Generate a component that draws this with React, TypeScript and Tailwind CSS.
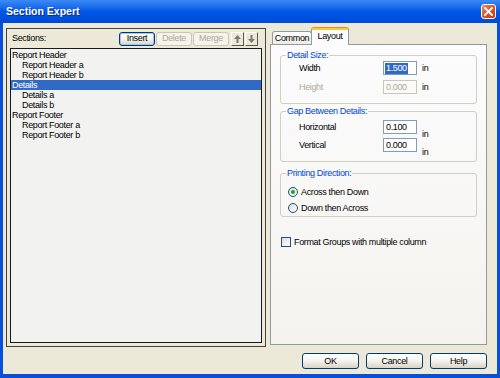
import React from "react";

const font = "font-['Liberation_Sans',Arial,sans-serif] tracking-[-0.35px]";

function Btn({
  label,
  className = "",
  disabled = false,
  focus = false,
}: {
  label: string;
  className?: string;
  disabled?: boolean;
  focus?: boolean;
}) {
  const look = disabled
    ? "border-[#C9C7BA] bg-[#F5F4EA] text-[#ACA899]"
    : "border-[#003C74] bg-linear-to-b from-[#FFFFFF] via-[#F4F3EE] to-[#D8D3C8] text-black";
  const ring = focus ? "shadow-[inset_0_0_0_1px_#A8C3EE]" : "";
  return (
    <div
      className={`flex items-center justify-center rounded-[3px] border text-[9px] leading-none ${look} ${ring} ${className}`}
    >
      {label}
    </div>
  );
}

function ArrowBtn({ down = false }: { down?: boolean }) {
  return (
    <div className="flex h-[14px] w-[13px] items-center justify-center border border-t-[#FFFFFF] border-l-[#FFFFFF] border-r-[#5A5A52] border-b-[#5A5A52] bg-[#ECE9D8]">
      <svg width="7" height="8" viewBox="0 0 7 8">
        {down ? (
          <path d="M2.5 0 H4.5 V4 H7 L3.5 8 L0 4 H2.5 Z" fill="#7A7A72" />
        ) : (
          <path d="M3.5 0 L7 4 H4.5 V8 H2.5 V4 H0 Z" fill="#7A7A72" />
        )}
      </svg>
    </div>
  );
}

const items: { text: string; level: number; selected?: boolean }[] = [
  { text: "Report Header", level: 0 },
  { text: "Report Header a", level: 1 },
  { text: "Report Header b", level: 1 },
  { text: "Details", level: 0, selected: true },
  { text: "Details a", level: 1 },
  { text: "Details b", level: 1 },
  { text: "Report Footer", level: 0 },
  { text: "Report Footer a", level: 1 },
  { text: "Report Footer b", level: 1 },
];

function Field({ value, disabled = false, selected = false }: { value: string; disabled?: boolean; selected?: boolean }) {
  return (
    <div
      className={`flex h-[14px] w-[34px] items-center border pl-[1px] text-[9px] leading-none ${
        disabled ? "border-[#C9C7BA] bg-[#FBFBF8] text-[#ACA899]" : "border-[#7F9DB9] bg-white text-black"
      }`}
    >
      {selected ? (
        <span className="bg-[#316AC5] px-[1px] py-[1px] text-white">{value}</span>
      ) : (
        <span className="px-[1px]">{value}</span>
      )}
    </div>
  );
}

function Radio({ checked = false, label }: { checked?: boolean; label: string }) {
  return (
    <div className="ml-[2px] flex h-[12px] items-center">
      <div className="flex h-[10px] w-[10px] items-center justify-center rounded-full border border-[#1C5180] bg-linear-to-br from-[#DCDCD6] to-[#FFFFFF]">
        {checked && <div className="h-[4px] w-[4px] rounded-full bg-[#21A121]" />}
      </div>
      <span className="ml-[3px] text-[9px] leading-none text-black">{label}</span>
    </div>
  );
}

export default function App() {
  return (
    <div className={`flex h-[378px] w-[500px] flex-col bg-[#0A4FDA] ${font}`}>
      {/* Title bar */}
      <div className="flex h-[23px] shrink-0 items-center justify-between bg-linear-to-b from-[#3B8AF5] via-[#0058E6] to-[#0049D6] pl-[6px] pr-[4px]">
        <span className="text-[10.5px] font-bold leading-none tracking-normal text-white [text-shadow:1px_1px_0_#0B2E8A]">
          Section Expert
        </span>
        <div className="flex h-[15px] w-[15px] items-center justify-center rounded-[3px] border border-white bg-linear-to-br from-[#F08A62] via-[#E0542A] to-[#C23A14]">
          <svg width="9" height="9" viewBox="0 0 9 9">
            <path d="M1 1 L8 8 M8 1 L1 8" stroke="white" strokeWidth="1.8" strokeLinecap="square" />
          </svg>
        </div>
      </div>

      {/* Body */}
      <div className="mx-[3px] mb-[4px] flex flex-1 flex-col bg-[#ECE9D8] pl-[3px] pr-[10px] pt-[4px]">
        <div className="flex gap-[4px]">
          {/* Left panel */}
          <div className="mt-[1px] flex h-[319px] w-[260px] flex-col border border-[#45453F] px-[3px] pb-[3px]">
            <div className="flex h-[19px] items-center">
              <span className="ml-[2px] text-[9px] leading-none text-black">Sections:</span>
              <div className="ml-auto mr-[4px] flex items-center">
                <Btn label="Insert" className="h-[14px] w-[36px]" focus />
                <Btn label="Delete" className="ml-[1px] h-[14px] w-[36px]" disabled />
                <Btn label="Merge" className="ml-[1px] h-[14px] w-[36px]" disabled />
                <div className="ml-[2px]">
                  <ArrowBtn />
                </div>
                <div className="ml-[1px]">
                  <ArrowBtn down />
                </div>
              </div>
            </div>
            <div className="flex-1 border border-[#1A1A1A] bg-[#F2F2F0] pt-[1px]">
              {items.map((it) => (
                <div
                  key={it.text}
                  className={`h-[10px] text-[9px] leading-[10px] ${it.level ? "pl-[11px]" : "pl-[1px]"} ${
                    it.selected ? "bg-[#316AC5] text-white" : "text-black"
                  }`}
                >
                  {it.text}
                </div>
              ))}
            </div>
          </div>

          {/* Right panel */}
          <div className="flex w-[217px] flex-col">
            <div className="flex h-[17px] items-end">
              <div className="ml-[2px] flex h-[13px] w-[40px] items-center justify-center rounded-t-[3px] border border-b-0 border-[#919B9C] bg-linear-to-b from-[#FFFFFF] to-[#ECEBE5] text-[9px] leading-none text-black">
                Common
              </div>
              <div className="relative z-10 -mb-px -ml-px flex h-[18px] w-[38px] flex-col rounded-t-[3px] border border-b-0 border-[#919B9C] border-t-[#E68B2C] bg-[#FCFCFE]">
                <div className="h-[2px] bg-[#FFC83C]" />
                <div className="flex flex-1 items-center justify-center pb-[2px] text-[9px] leading-none text-black">Layout</div>
              </div>
            </div>
            <div className="flex h-[301px] flex-col border border-[#919B9C] bg-linear-to-b from-[#FCFCFE] to-[#F4F3EE] px-[9px] pt-[5px]">
              {/* Detail Size */}
              <fieldset className="rounded-[3px] border border-[#D0D0BF] pb-[9px] pl-[5px]">
                <legend className="px-[1px] text-[9px] leading-[10px] text-[#0046D5]">Detail Size:</legend>
                <div className="mt-[1px] flex items-center">
                  <span className="ml-[13px] w-[84px] text-[9px] leading-none text-black">Width</span>
                  <Field value="1.500" selected />
                  <span className="ml-[5px] text-[9px] leading-none text-black">in</span>
                </div>
                <div className="mt-[5px] flex items-center">
                  <span className="ml-[13px] w-[84px] text-[9px] leading-none text-[#ACA899]">Height</span>
                  <Field value="0.000" disabled />
                  <span className="ml-[5px] text-[9px] leading-none text-black">in</span>
                </div>
              </fieldset>

              {/* Gap Between Details */}
              <fieldset className="mt-[2px] rounded-[3px] border border-[#D0D0BF] pb-[9px] pl-[5px]">
                <legend className="px-[1px] text-[9px] leading-[10px] text-[#0046D5]">Gap Between Details:</legend>
                <div className="mt-[4px] flex items-center">
                  <span className="ml-[13px] w-[84px] text-[9px] leading-none text-black">Horizontal</span>
                  <Field value="0.100" />
                  <span className="-mb-[5px] ml-[5px] self-end text-[9px] leading-none text-black">in</span>
                </div>
                <div className="mt-[4px] flex items-center">
                  <span className="ml-[13px] w-[84px] text-[9px] leading-none text-black">Vertical</span>
                  <Field value="0.000" />
                  <span className="-mb-[5px] ml-[5px] self-end text-[9px] leading-none text-black">in</span>
                </div>
              </fieldset>

              {/* Printing Direction */}
              <fieldset className="mt-[6px] rounded-[3px] border border-[#D0D0BF] pb-[2px] pl-[5px]">
                <legend className="px-[1px] text-[9px] leading-[10px] text-[#0046D5]">Printing Direction:</legend>
                <div className="mt-[8px]">
                  <Radio checked label="Across then Down" />
                </div>
                <div className="mt-[4px]">
                  <Radio label="Down then Across" />
                </div>
              </fieldset>

              {/* Checkbox */}
              <div className="ml-[1px] mt-[20px] flex h-[10px] items-center">
                <div className="h-[10px] w-[10px] border border-[#1C5180] bg-linear-to-br from-[#DCDCD6] to-[#FFFFFF]" />
                <span className="ml-[3px] text-[9px] leading-none text-black">Format Groups with multiple column</span>
              </div>
            </div>
          </div>
        </div>

        {/* Bottom buttons */}
        <div className="mt-[6px] flex justify-end gap-[7px]">
          <Btn label="OK" className="h-[16px] w-[57px]" />
          <Btn label="Cancel" className="h-[16px] w-[57px]" />
          <Btn label="Help" className="h-[16px] w-[57px]" />
        </div>
      </div>
    </div>
  );
}
